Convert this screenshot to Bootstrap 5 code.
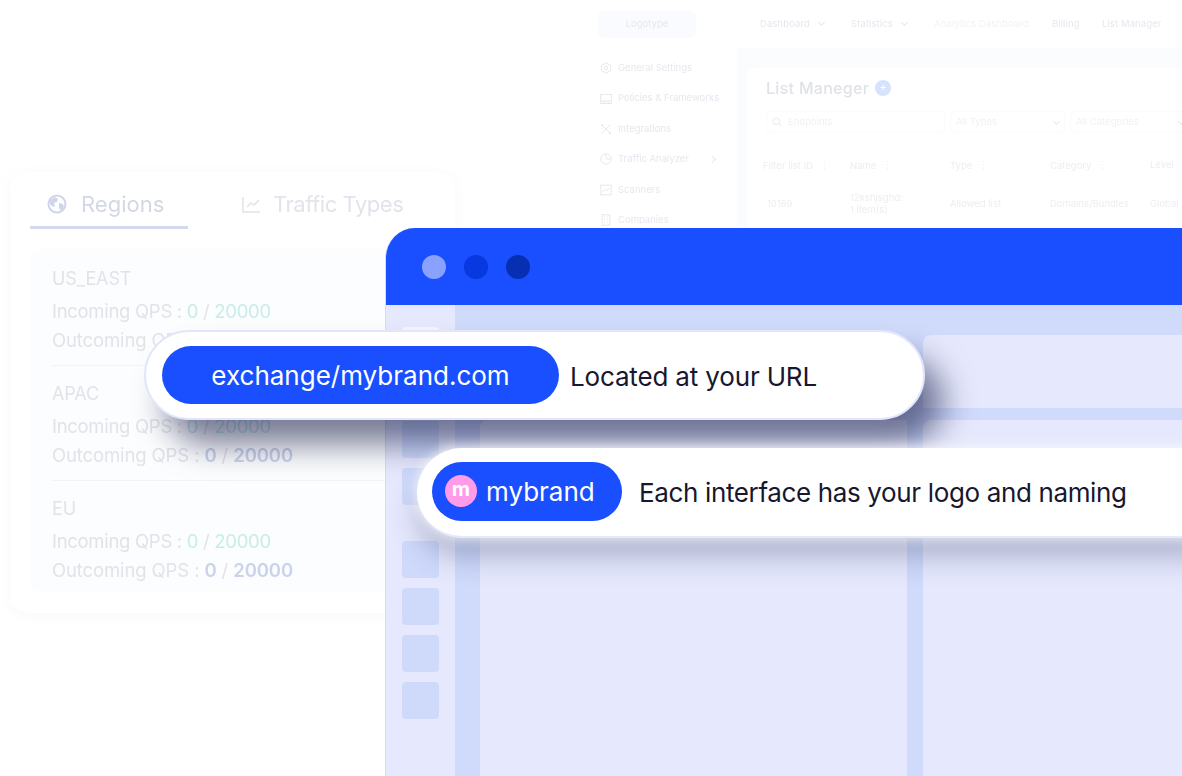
<!DOCTYPE html>
<html lang="en"><head><meta charset="utf-8"><title>White label</title>
<link href="https://cdn.jsdelivr.net/npm/bootstrap@5.3.0/dist/css/bootstrap.min.css" rel="stylesheet">
<style>
html,body{margin:0;background:#fff;overflow:hidden}
body{font-family:Inter,"Noto Sans",sans-serif}
.stage{position:relative;width:1182px;height:776px;overflow:hidden;background:#fff}
/* back app */
.app{position:absolute;left:590px;top:0;width:640px;height:240px;filter:blur(.6px);color:#e6e8ee;font-size:9.5px}
.app-top{height:48px;padding:11px 0 0 8px}
.logo-box{width:98px;height:27px;background:#fafbfe;border-radius:6px;display:flex;align-items:center;justify-content:center;margin-right:64px}
.tnav{height:27px;align-items:center;letter-spacing:.1px}
.tnav span{display:block;white-space:nowrap}
.tn1{width:91px}.tn2{width:83px}.tn3{width:118px;color:#f2f3f6}.tn4{width:50px}.tn5{width:80px}
.chev{display:inline-block;width:5px;height:5px;border-right:1px solid #e6e8ee;border-bottom:1px solid #e6e8ee;transform:rotate(45deg);margin:0 0 2px 9px}
.app-body{height:190px}
.app-side{width:147px;flex:none;padding:5px 0 0 10px;display:flex;flex-direction:column}
.side-row{height:30.4px;flex:none;display:flex;align-items:center;gap:6px;white-space:nowrap;position:relative}
.side-row svg{width:12px;height:12px;flex:none}
.side-row .chev2{position:absolute;left:110px;top:13px;width:5px;height:5px;border-right:1px solid #e6e8ee;border-top:1px solid #e6e8ee;transform:rotate(45deg)}
.app-main{flex:1;min-width:0;background:#fbfcfe;padding:20px 0 0 10px}
.app-card{background:#fff;border-radius:8px 0 0 0;height:200px;padding:9px 0 0 19px;white-space:nowrap}
.app-title{font-size:16px;font-weight:500;color:#e0e2e9;gap:6px;line-height:22px;height:22px;letter-spacing:.3px}
.plus{width:16px;height:16px;border-radius:50%;background:#d7e2fd;color:#fff;font-size:11px;line-height:15px;text-align:center;letter-spacing:0}
.filters{display:flex;gap:5px;margin-top:12px}
.fbox{height:22px;border:1px solid #fafbfc;border-radius:4px;display:flex;align-items:center;padding:0 5px;justify-content:space-between;color:#f0f1f4;flex:none}
.f1{width:179px;justify-content:flex-start;gap:6px}.f2{width:115px}.f3{width:120px}
.thead-row,.tbody-row{display:flex;margin-left:-3px}
.thead-row{margin-top:21px;height:22px;align-items:center;color:#edeef2}
.tbody-row{margin-top:14px;height:28px;align-items:center;color:#edeef2}
.c1{width:87px;flex:none}.c2{width:100px;flex:none}.c3{width:100px;flex:none}.c4{width:100px;flex:none}.c5{width:100px;flex:none}
.sort{font-size:11px;margin-left:6px;letter-spacing:0}
.two{line-height:12px}
/* left card */
.region{position:absolute;left:10px;top:172px;width:445px;height:441px;background:#fff;border-radius:18px;box-shadow:0 2px 14px rgba(190,200,225,.13);filter:blur(.45px);padding:0 20px;color:#e1e3e9}
.rtabs{height:57px;font-size:22px;display:flex}
.rtab{display:flex;align-items:center;gap:12px;height:57px;flex:none;padding-top:8px}
.rt1{width:158px;padding-left:17px;padding-top:10px;border-bottom:3px solid #d3daf0;color:#d4d8e4;gap:14px}
.rt2{padding-left:53px;color:#e2e4ea;letter-spacing:-.45px}
.rbox{margin-top:20px;height:343px;background:#fcfdfe;border-radius:10px;padding:17px 22px 0;font-size:18.5px;letter-spacing:-.12px}
.rgroup{height:115px;border-bottom:1px solid #f3f4f8;padding-top:15px}
.rgroup:first-child{height:100px;padding-top:0}
.rgroup:last-child{border:0}
.rname{font-size:18px;line-height:25px;margin-bottom:6px}
.rline{line-height:29px;white-space:nowrap}
.rin{letter-spacing:-.3px}
.teal{color:#c8ede7;font-weight:400}.blu{color:#cbd3ec;font-weight:600}
/* window */
.win{position:absolute;left:385px;top:228px;width:840px;height:600px;border-radius:30px 0 0 0;background:#e6e9fd;overflow:hidden;border-left:1px solid #d6dcf8}
.win-head{height:77px;background:#1a4fff;display:flex;align-items:center;gap:18px;padding:0 0 0 36px}
.dot{width:24px;height:24px;border-radius:50%}
.d1{background:#8aa2fe}.d2{background:#0738e0}.d3{background:#062fb2}
.win-body{height:523px;display:flex}
.win-side{width:69px;flex:none;padding:22px 0 0 16px;display:flex;flex-direction:column;gap:10px}
.sq{width:37px;height:37px;border-radius:4px;background:#cfdafb}
.sq-w{background:#f4f6ff}
.sq-gap{margin-top:26px}
.win-main{flex:1;background:#d0dafb;display:grid;grid-template-columns:427px 1fr;grid-template-rows:73px 1fr;gap:12px 16px;padding:30px 0 0 25px}
.pane{background:#e6e9fd;border-radius:8px 0 0 0}
.p-a{grid-column:1;grid-row:2}.p-b{grid-column:2;grid-row:1}.p-c{grid-column:2;grid-row:2}
/* pills */
.pill-out{position:absolute;background:#fff;border-radius:45px;display:flex;align-items:center;color:#17172f;font-weight:400;white-space:nowrap}
.pill1{left:144px;top:330px;width:781px;height:90px;border:2px solid #e1e6fb;padding:2px 0 0 16px;font-size:26px;letter-spacing:-.16px;box-shadow:20px 26px 32px -2px rgba(10,15,60,.55)}
.pill2{left:417px;top:448px;width:830px;height:90px;border-bottom:2px solid #e3e8fa;padding:1px 0 0 15px;font-size:26px;letter-spacing:-.36px;box-shadow:0 0 12px 2px rgba(255,255,255,.75),0 20px 30px -2px rgba(30,40,90,.3)}
.pill-in{background:#1a4fff;color:#fff;border-radius:30px;height:58px;display:flex;align-items:center;justify-content:center;flex:none;font-weight:400;letter-spacing:0;margin-top:-2px}
.pi1{width:397px;margin-right:11px;font-size:26px}
.pi2{width:190px;height:59px;margin-right:17px;margin-top:-3px;gap:9px;justify-content:flex-start;padding-left:13px;font-size:26px}
.mlogo{width:32px;height:32px;border-radius:50%;background:#ff9be8;color:#fff;font-weight:700;font-size:20px;line-height:28px;text-align:center}
</style></head><body>
<div class="stage">

<div class="app">
  <div class="app-top d-flex">
    <div class="logo-box">Logotype</div>
    <div class="tnav d-flex">
      <span class="tn1">Dashboard<i class="chev"></i></span><span class="tn2">Statistics<i class="chev"></i></span><span class="tn3">Analytics Dashboard</span><span class="tn4">Billing</span><span class="tn5">List Manager</span>
    </div>
  </div>
  <div class="app-body d-flex">
    <div class="app-side">
      <div class="side-row"><svg viewBox="0 0 12 12" fill="none" stroke="#e6e8ee"><path d="M6 .8l4.500 2.600v5.200L6 11.200 1.500 8.600V3.400z"/><circle cx="6" cy="6" r="1.700"/></svg>General Settings</div>
      <div class="side-row"><svg viewBox="0 0 12 12" fill="none" stroke="#e6e8ee"><rect x=".7" y="1.500" width="10.600" height="9"/><path d="M.7 8h10.600M4 8v2.500M8 8v2.500"/></svg>Policies &amp; Frameworks</div>
      <div class="side-row"><svg viewBox="0 0 12 12" fill="none" stroke="#e6e8ee"><path d="M1.500 1.500l9 9M10.500 1.500l-9 9M1 3l2-2M9 11l2-2"/></svg>Integrations</div>
      <div class="side-row"><svg viewBox="0 0 12 12" fill="none" stroke="#e6e8ee"><circle cx="6" cy="6" r="5.200"/><path d="M6 .8V6h5.200"/></svg>Traffic Analyzer<i class="chev2"></i></div>
      <div class="side-row"><svg viewBox="0 0 12 12" fill="none" stroke="#e6e8ee"><rect x=".8" y="1.200" width="10.400" height="9.600"/><path d="M2.500 8l2.500-2.500 1.500 1.200L9.500 4"/></svg>Scanners</div>
      <div class="side-row"><svg viewBox="0 0 12 12" fill="none" stroke="#e6e8ee"><rect x="2.200" y=".8" width="7.600" height="10.400"/><path d="M4 3h1M7 3h1M4 5.500h1M7 5.500h1M4 8h1M7 8h1"/></svg>Companies</div>
    </div>
    <div class="app-main">
      <div class="app-card">
        <div class="app-title d-flex align-items-center">List Maneger <span class="plus">+</span></div>
        <div class="filters">
          <div class="fbox f1"><svg width="10" height="10" viewBox="0 0 10 10" fill="none" stroke="#e8eaef"><circle cx="4.300" cy="4.300" r="3.300"/><path d="M6.800 6.800L9.500 9.500"/></svg>Endpoints</div>
          <div class="fbox f2">All Types<i class="chev"></i></div>
          <div class="fbox f3">All Categories<i class="chev"></i></div>
        </div>
        <div class="thead-row"><div class="c1">Filter list ID<span class="sort">⋮</span></div><div class="c2">Name<span class="sort">⋮</span></div><div class="c3">Type<span class="sort">⋮</span></div><div class="c4">Category<span class="sort">⋮</span></div><div class="c5">Level</div></div>
        <div class="tbody-row"><div class="c1 ps-1">10189</div><div class="c2 two">12kshjsghd:<br>1 item(s)</div><div class="c3">Allowed list</div><div class="c4">Domains/Bundles</div><div class="c5">Global</div></div>
      </div>
    </div>
  </div>
</div>

<div class="region">
  <div class="rtabs">
    <div class="rtab rt1"><svg width="20" height="20" viewBox="0 0 20 20"><circle cx="10" cy="10" r="8.500" fill="none" stroke="#cfd6ec" stroke-width="2"/><path d="M3 6l5-3 3 2-1 3-3 1 1 3-2 1-3-3zM12 9l4 1 1 3-3 4-2-3z" fill="#cfd6ec"/></svg>Regions</div>
    <div class="rtab rt2"><svg width="20" height="20" viewBox="0 0 20 20" fill="none" stroke="#e2e4ea" stroke-width="1.500"><path d="M2 2v15h17M6 12l4-4 3 2 5-5"/></svg>Traffic Types</div>
  </div>
  <div class="rbox">
    <div class="rgroup"><div class="rname">US_EAST</div><div class="rline rin">Incoming QPS : <span class="teal">0</span> / <span class="teal">20000</span></div><div class="rline">Outcoming QPS : <span class="blu">0</span> / <span class="blu">20000</span></div></div>
    <div class="rgroup"><div class="rname">APAC</div><div class="rline rin">Incoming QPS : <span class="teal">0</span> / <span class="teal">20000</span></div><div class="rline">Outcoming QPS : <span class="blu">0</span> / <span class="blu">20000</span></div></div>
    <div class="rgroup"><div class="rname">EU</div><div class="rline rin">Incoming QPS : <span class="teal">0</span> / <span class="teal">20000</span></div><div class="rline">Outcoming QPS : <span class="blu">0</span> / <span class="blu">20000</span></div></div>
  </div>
</div>

<div class="win">
  <div class="win-head"><div class="dot d1"></div><div class="dot d2"></div><div class="dot d3"></div></div>
  <div class="win-body">
    <div class="win-side">
      <div class="sq sq-w"></div><div class="sq"></div><div class="sq"></div><div class="sq"></div>
      <div class="sq sq-gap"></div><div class="sq"></div><div class="sq"></div><div class="sq"></div>
    </div>
    <div class="win-main">
      <div></div><div class="pane p-a"></div><div class="pane p-b"></div><div class="pane p-c"></div>
    </div>
  </div>
</div>

<div class="pill-out pill1"><div class="pill-in pi1">exchange/mybrand.com</div>Located at your URL</div>
<div class="pill-out pill2"><div class="pill-in pi2"><span class="mlogo">m</span>mybrand</div>Each interface has your logo and naming</div>

</div>
<script src="https://cdn.jsdelivr.net/npm/bootstrap@5.3.0/dist/js/bootstrap.bundle.min.js"></script>
</body></html>
